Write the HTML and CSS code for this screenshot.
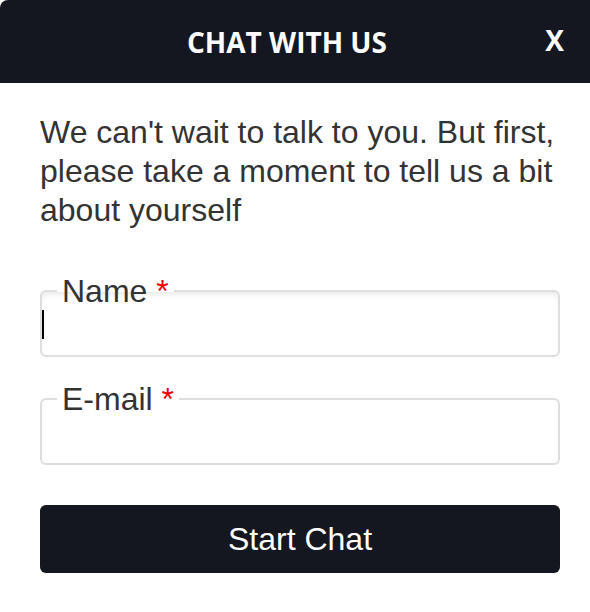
FILE: index.html
```html
<!DOCTYPE html>
<html>
<head>
<meta charset="utf-8">
<link rel="stylesheet" href="styles.css">
</head>
<body>
<div class="widget">
  <header class="header">
    <h1 class="title">CHAT WITH US</h1>
    <span class="close">X</span>
  </header>
  <main class="content">
    <p class="intro">We can't wait to talk to you. But first, please take a moment to tell us a bit about yourself</p>
    <form class="form">
      <fieldset class="field field-focus">
        <legend class="label">Name <span class="req">*</span></legend>
        <div class="input"><span class="caret"></span></div>
      </fieldset>
      <fieldset class="field">
        <legend class="label">E-mail <span class="req">*</span></legend>
        <div class="input"></div>
      </fieldset>
      <button type="button" class="start">Start Chat</button>
    </form>
  </main>
</div>
</body>
</html>
```
FILE: styles.css
```css
html, body {
  margin: 0;
  padding: 0;
  background: #ffffff;
}
.widget {
  width: 590px;
  height: 612px;
  background: #ffffff;
}
.header {
  height: 83px;
  background: #14171f;
  border-top-left-radius: 8px;
  display: flex;
  align-items: center;
  justify-content: center;
  padding-right: 16px;
  position: relative;
}
.title {
  margin: 0;
  font-family: "Open Sans", sans-serif;
  font-weight: 700;
  font-size: 28px;
  color: #ffffff;
  letter-spacing: 0;
}
.close {
  position: absolute;
  right: 26px;
  top: 26px;
  font-family: "Open Sans", sans-serif;
  font-weight: 700;
  font-size: 28px;
  color: #ffffff;
  line-height: 1;
}
.content {
  padding: 30px 30px 0 40px;
}
.intro {
  margin: 0;
  font-family: "Liberation Sans", Arial, sans-serif;
  font-size: 32px;
  line-height: 39px;
  color: #333333;
}
.form {
  margin-top: 46px;
  width: 520px;
  display: flex;
  flex-direction: column;
}
.field {
  margin: 0 0 27px 0;
  padding: 0;
  border: 2px solid #dedede;
  border-radius: 6px;
  min-width: 0;
}
.field-focus {
  box-shadow: inset 0 5px 6px -3px rgba(0,0,0,0.10);
}
.label {
  margin-left: 15px;
  padding: 0 5px;
  font-family: "Liberation Sans", Arial, sans-serif;
  font-size: 32px;
  line-height: 30px;
  color: #333333;
}
.req {
  color: #ee0000;
  font-size: 32px;
}
.input {
  height: 62px;
  margin-top: -13px;
  display: flex;
  align-items: center;
}
.caret {
  display: block;
  width: 2px;
  height: 29px;
  background: #000;
}
.start {
  margin-top: 13px;
  height: 68px;
  border: none;
  border-radius: 6px;
  background: #14171f;
  color: #ffffff;
  font-family: "Liberation Sans", Arial, sans-serif;
  font-size: 32px;
  padding: 0;
}
```
